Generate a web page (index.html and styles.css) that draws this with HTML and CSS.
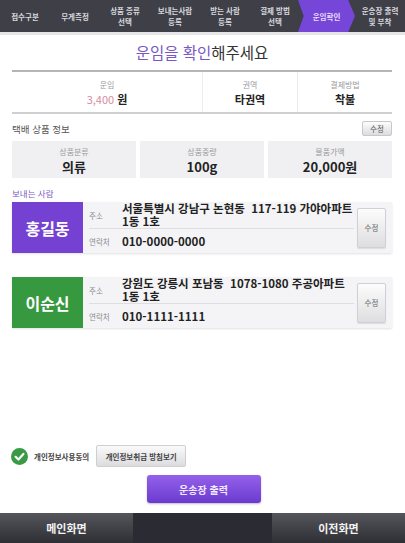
FILE: index.html
```html
<!DOCTYPE html>
<html lang="ko">

<head>
  <meta charset="UTF-8">
  <meta name="viewport" content="width=device-width, initial-scale=1.0">
  <title>운임확인</title>
  <link rel="stylesheet" href="styles.css">
</head>

<body>
  <div class="steps">
    <div class="step">접수구분</div>
    <div class="step">무게측정</div>
    <div class="step">상품 종류<br>선택</div>
    <div class="step">보내는사람<br>등록</div>
    <div class="step">받는 사람<br>등록</div>
    <div class="step">결제 방법<br>선택</div>
    <div class="step active">운임확인</div>
    <div class="step last">운송장 출력<br>및 부착</div>
  </div>

  <div class="content">
    <h1 class="title"><span class="hl">운임을 확인</span>해주세요</h1>

    <div class="fare">
      <div class="fare-col wide">
        <p class="label">운임</p>
        <p class="value"><span class="price">3,400</span> 원</p>
      </div>
      <div class="fare-col">
        <p class="label">권역</p>
        <p class="value">타권역</p>
      </div>
      <div class="fare-col">
        <p class="label">결제방법</p>
        <p class="value">착불</p>
      </div>
    </div>

    <div class="section-head">
      <span>택배 상품 정보</span>
      <button class="btn-small">수정</button>
    </div>
    <div class="goods">
      <div class="goods-box">
        <p class="label">상품분류</p>
        <p class="value">의류</p>
      </div>
      <div class="goods-box">
        <p class="label">상품중량</p>
        <p class="value">100g</p>
      </div>
      <div class="goods-box">
        <p class="label">물품가액</p>
        <p class="value">20,000원</p>
      </div>
    </div>

    <p class="sub-head">보내는 사람</p>
    <div class="person">
      <div class="name purple">홍길동</div>
      <div class="info">
        <div class="row addr">
          <span class="row-label">주소</span>
          <span class="row-text">서울특별시 강남구 논현동&nbsp; 117-119 가야아파트 1동 1호</span>
        </div>
        <div class="row">
          <span class="row-label">연락처</span>
          <span class="row-text">010-0000-0000</span>
        </div>
      </div>
      <div class="edit"><button class="btn-edit">수정</button></div>
    </div>

    <div class="person receiver">
      <div class="name green">이순신</div>
      <div class="info">
        <div class="row addr">
          <span class="row-label">주소</span>
          <span class="row-text">강원도 강릉시 포남동&nbsp; 1078-1080 주공아파트 1동 1호</span>
        </div>
        <div class="row">
          <span class="row-label">연락처</span>
          <span class="row-text">010-1111-1111</span>
        </div>
      </div>
      <div class="edit"><button class="btn-edit">수정</button></div>
    </div>
  </div>

  <div class="agree">
    <svg class="check" width="17" height="17" viewBox="0 0 17 17">
      <circle cx="8.5" cy="8.5" r="8.5" fill="#3a9b45" />
      <path d="M4.6 8.8 L7.4 11.5 L12.4 5.9" fill="none" stroke="#fff" stroke-width="2.2" stroke-linecap="round" stroke-linejoin="round" />
    </svg>
    <span class="agree-text">개인정보사용동의</span>
    <button class="btn-policy">개인정보취급 방침보기</button>
  </div>

  <div class="print-wrap">
    <button class="btn-print">운송장 출력</button>
  </div>

  <div class="footer">
    <div class="foot-btn">메인화면</div>
    <div class="foot-mid"></div>
    <div class="foot-btn">이전화면</div>
  </div>
</body>

</html>
```

FILE: styles.css
```css
* {
  box-sizing: border-box;
}

body {
  margin: 0;
  width: 405px;
  height: 543px;
  display: flex;
  flex-direction: column;
  background: #fff;
  font-family: "Noto Sans CJK KR", "Noto Sans", sans-serif;
  color: #222;
  overflow: hidden;
}

p {
  margin: 0;
}

button {
  font-family: inherit;
  cursor: pointer;
}

/* 상단 단계 표시 */
.steps {
  display: flex;
  height: 35px;
  background: #3e3f47;
  border-bottom: 3px solid #e6e6e8;
}

.step {
  flex: 1;
  display: flex;
  align-items: center;
  justify-content: center;
  text-align: center;
  color: #d8d8de;
  font-size: 7.5px;
  line-height: 11px;
  font-weight: bold;
}

.step.active {
  flex: 0 0 57px;
  margin: 0 -4px 0 -2px;
  background: #7646d8;
  color: #e8dcff;
  clip-path: polygon(0 0, 88% 0, 100% 50%, 88% 100%, 0 100%, 10% 50%);
}

.step.last {
  padding-left: 4px;
}

.content {
  padding: 0 13px 0 12px;
}

.title {
  margin: 0;
  height: 35px;
  line-height: 34px;
  text-align: center;
  font-size: 15.5px;
  font-weight: normal;
  color: #333;
}

.title .hl {
  color: #7a58c4;
}

/* 운임 */
.fare {
  display: flex;
  border-top: 2px solid #b5b5b8;
  border-bottom: 2px solid #d0d0d3;
  height: 44px;
}

.fare-col {
  flex: 0 0 95px;
  display: flex;
  flex-direction: column;
  align-items: center;
  justify-content: center;
  border-left: 1px solid #ececee;
}

.fare-col.wide {
  flex: 0 0 190px;
  border-left: none;
}

.label {
  font-size: 8px;
  color: #9a9a9e;
  line-height: 13px;
}

.value {
  font-size: 11px;
  font-weight: bold;
  line-height: 16px;
  color: #222;
}

.fare .price {
  color: #d88ca0;
  font-weight: normal;
}

/* 택배 상품 정보 */
.section-head {
  display: flex;
  justify-content: space-between;
  align-items: center;
  height: 27px;
  padding-top: 2px;
  font-size: 9.5px;
  color: #555;
}

.btn-small {
  width: 30px;
  height: 15px;
  padding: 0;
  font-size: 7.5px;
  color: #555;
  background: linear-gradient(#fdfdfd, #dcdcdf);
  border: 1px solid #c8c8cc;
  border-radius: 2px;
}

.goods {
  display: flex;
  gap: 4px;
}

.goods-box {
  flex: 1;
  height: 37px;
  background: #f0f0f3;
  display: flex;
  flex-direction: column;
  align-items: center;
  justify-content: center;
}

.goods-box .value {
  font-size: 13px;
  line-height: 17px;
}

.sub-head {
  height: 24px;
  padding-top: 9px;
  font-size: 8.5px;
  color: #7a58c4;
}

/* 보내는/받는 사람 */
.person {
  display: flex;
  height: 51px;
  background: #f4f4f6;
  box-shadow: 0 1px 2px rgba(0, 0, 0, 0.12);
}

.person.receiver {
  margin-top: 24px;
}

.name {
  flex: 0 0 71px;
  display: flex;
  align-items: center;
  justify-content: center;
  color: #fff;
  font-size: 16px;
  font-weight: bold;
}

.name.purple {
  background: #7441d2;
}

.name.green {
  background: #37993f;
}

.info {
  flex: 1;
  display: flex;
  flex-direction: column;
  padding-left: 6px;
}

.row {
  flex: 1;
  display: flex;
  align-items: center;
}

.row.addr {
  flex: 0 0 26px;
  border-bottom: 1px solid #dedee2;
}

.row-label {
  flex: 0 0 33px;
  font-size: 7.5px;
  color: #8a8a8e;
}

.row-text {
  flex: 1;
  font-size: 11.5px;
  line-height: 13px;
  font-weight: bold;
  color: #222;
  word-break: break-all;
}

.edit {
  flex: 0 0 38px;
  display: flex;
  align-items: center;
  padding: 0 6px 0 3px;
}

.btn-edit {
  width: 29px;
  height: 40px;
  padding: 0;
  font-size: 7.5px;
  color: #666;
  background: linear-gradient(#fcfcfc, #dedee1);
  border: 1px solid #d0d0d4;
  border-radius: 2px;
  box-shadow: 0 1px 1px rgba(0, 0, 0, 0.1);
}

/* 하단 */
.agree {
  margin-top: auto;
  display: flex;
  align-items: center;
  padding-left: 11px;
  height: 22px;
}

.check {
  margin-right: 6px;
}

.agree-text {
  font-size: 7.5px;
  font-weight: bold;
  color: #444;
  margin-right: 7px;
}

.btn-policy {
  width: 90px;
  height: 22px;
  padding: 0;
  font-size: 7.5px;
  font-weight: bold;
  color: #444;
  background: linear-gradient(#fafafa, #dcdcdf);
  border: 1px solid #cfcfd3;
  border-radius: 2px;
}

.print-wrap {
  display: flex;
  justify-content: center;
  padding: 8px 0 10px;
}

.btn-print {
  width: 114px;
  height: 28px;
  margin-left: 2px;
  border: none;
  border-radius: 3px;
  background: linear-gradient(#9461ea, #6b3bd0);
  color: #f2eaff;
  font-size: 10px;
  font-weight: bold;
  box-shadow: 0 1px 2px rgba(0, 0, 0, 0.25);
}

.footer {
  display: flex;
  height: 30px;
}

.foot-btn {
  flex: 0 0 133px;
  display: flex;
  align-items: center;
  justify-content: center;
  background: linear-gradient(#55565c, #2e2f35);
  color: #f2f2f2;
  font-size: 11px;
  font-weight: bold;
}

.foot-mid {
  flex: 1;
  background: #2b2c33;
}
```
